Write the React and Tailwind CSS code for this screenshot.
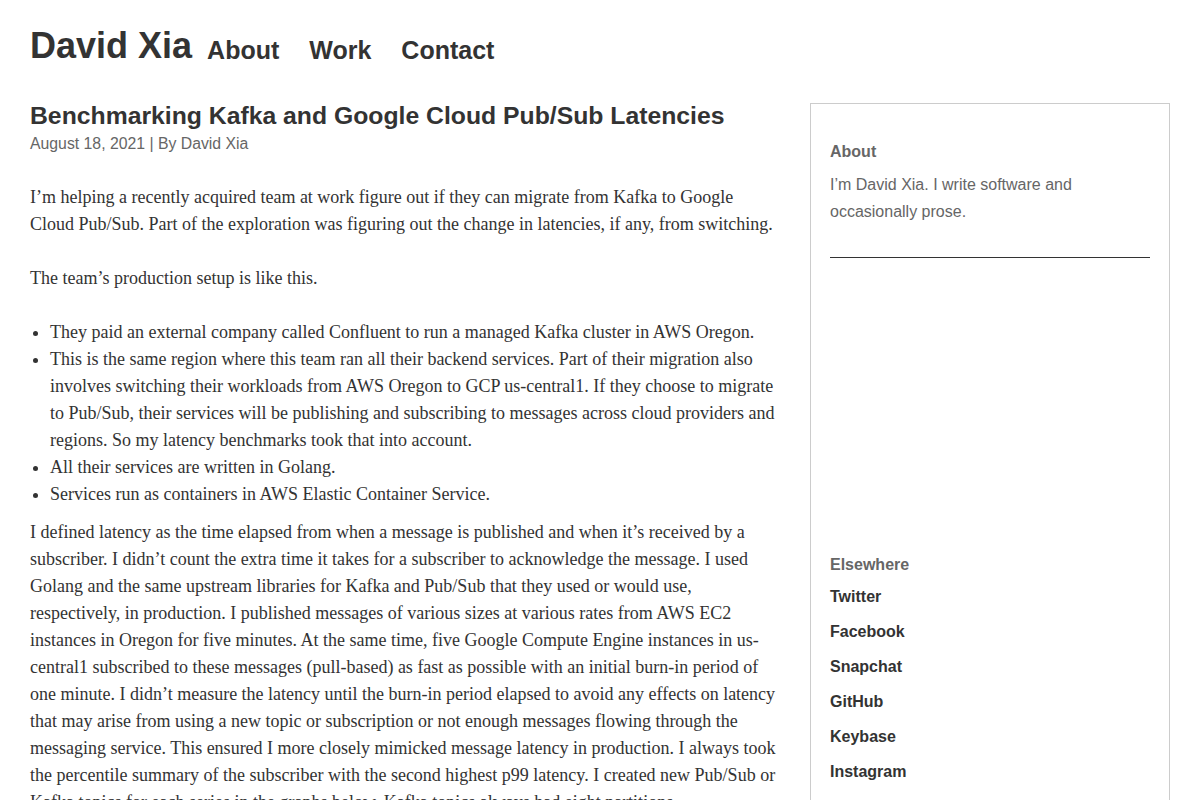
import React from "react";

const sans = "font-['Liberation_Sans',Arial,sans-serif]";
const serif = "font-['Liberation_Serif','Times_New_Roman',serif]";

const setup = [
  "They paid an external company called Confluent to run a managed Kafka cluster in AWS Oregon.",
  "This is the same region where this team ran all their backend services. Part of their migration also involves switching their workloads from AWS Oregon to GCP us-central1. If they choose to migrate to Pub/Sub, their services will be publishing and subscribing to messages across cloud providers and regions. So my latency benchmarks took that into account.",
  "All their services are written in Golang.",
  "Services run as containers in AWS Elastic Container Service.",
];

const links = ["Twitter", "Facebook", "Snapchat", "GitHub", "Keybase", "Instagram"];

function Header() {
  return (
    <header className="flex items-baseline px-[30px] pt-[24px]">
      <h1 className="text-[36px] leading-[43px] font-bold text-[#333]">David Xia</h1>
      <nav className="ml-[15px] flex translate-y-[1px] gap-[30px] text-[25px] font-bold text-[#333]">
        <a href="#">About</a>
        <a href="#">Work</a>
        <a href="#">Contact</a>
      </nav>
    </header>
  );
}

function Post() {
  return (
    <article className="w-[750px] shrink-0 pt-[1px]">
      <h2 className="text-[24.75px] leading-[28px] font-bold text-[#333]">
        Benchmarking Kafka and Google Cloud Pub/Sub Latencies
      </h2>
      <div className="text-[15.8px] leading-[27px] text-[#666]">
        August 18, 2021 | By David Xia
      </div>

      <div className={`${serif} mt-[27px] text-[18px] leading-[27px] text-[#333]`}>
        <p className="mb-[27px]">
          I’m helping a recently acquired team at work figure out if they can migrate from Kafka to
          Google Cloud Pub/Sub. Part of the exploration was figuring out the change in latencies, if
          any, from switching.
        </p>
        <p className="mb-[27px]">The team’s production setup is like this.</p>
        <ul className="mb-[11px] list-disc pl-5">
          {setup.map((item) => (
            <li key={item}>{item}</li>
          ))}
        </ul>
        <p>
          I defined latency as the time elapsed from when a message is published and when it’s
          received by a subscriber. I didn’t count the extra time it takes for a subscriber to
          acknowledge the message. I used Golang and the same upstream libraries for Kafka and
          Pub/Sub that they used or would use, respectively, in production. I published messages of
          various sizes at various rates from AWS EC2 instances in Oregon for five minutes. At the
          same time, five Google Compute Engine instances in us-central1 subscribed to these
          messages (pull-based) as fast as possible with an initial burn-in period of one minute. I
          didn’t measure the latency until the burn-in period elapsed to avoid any effects on
          latency that may arise from using a new topic or subscription or not enough messages
          flowing through the messaging service. This ensured I more closely mimicked message
          latency in production. I always took the percentile summary of the subscriber with the
          second highest p99 latency. I created new Pub/Sub or Kafka topics for each series in the
          graphs below. Kafka topics always had eight partitions.
        </p>
      </div>
    </article>
  );
}

function Sidebar() {
  return (
    <aside className="mt-[2px] w-[360px] shrink-0 border border-[#ccc] px-[19px] pt-[34px] pb-[40px] text-[16px] leading-[27px]">
      <h3 className="font-bold text-[#666]">About</h3>
      <p className="mt-[6px] text-[#666]">
        I’m David Xia. I write software and occasionally prose.
      </p>
      <hr className="mt-[32px] border-t border-[#333]" />
      <div className="h-[293px]" />
      <h3 className="font-bold text-[#666]">Elsewhere</h3>
      <ul className="mt-[1px]">
        {links.map((l) => (
          <li key={l} className="leading-[35px] font-bold text-[#333]">
            <a href="#">{l}</a>
          </li>
        ))}
      </ul>
    </aside>
  );
}

export default function App() {
  return (
    <div className={`${sans} min-h-screen bg-white`}>
      <Header />
      <main className="mt-[32px] flex gap-[30px] px-[30px] pb-10">
        <Post />
        <Sidebar />
      </main>
    </div>
  );
}
